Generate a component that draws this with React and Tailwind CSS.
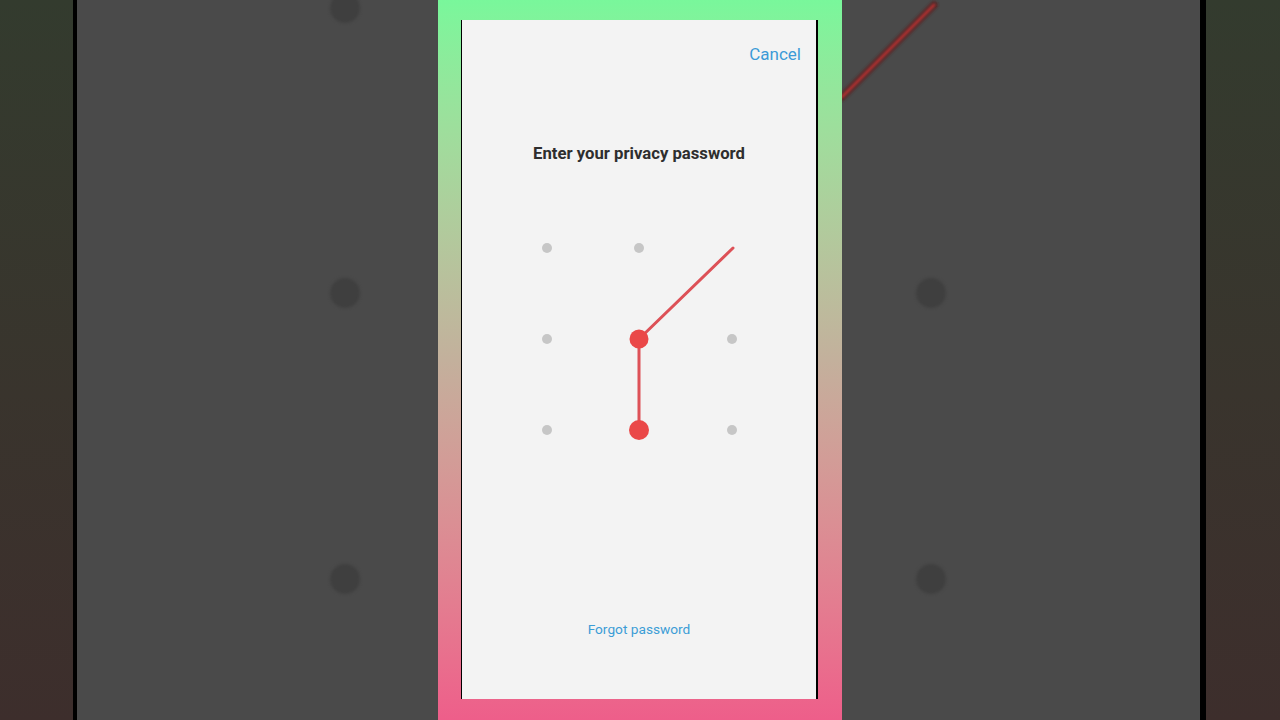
import React from "react";

function BgCircle({ x, y }) {
  return (
    <div
      className="absolute w-[30px] h-[30px] rounded-full bg-[#3f3f3f] blur-[1.5px]"
      style={{ left: x - 15, top: y - 15 }}
    />
  );
}

function Pattern() {
  const dots = [
    [85, 20], [177, 20],
    [85, 111], [270, 111],
    [85, 202], [270, 202],
  ];
  return (
    <svg width="354" height="222" viewBox="0 0 354 222" className="block">
      {dots.map(([x, y]) => (
        <circle key={x + "-" + y} cx={x} cy={y} r="5" fill="#c6c6c6" />
      ))}
      <line x1="177" y1="111" x2="271" y2="20" stroke="#dd5157" strokeWidth="3" strokeLinecap="round" />
      <line x1="177" y1="111" x2="177" y2="202" stroke="#dd5157" strokeWidth="3" strokeLinecap="round" />
      <circle cx="177" cy="111" r="9.5" fill="#ea4848" />
      <circle cx="177" cy="202" r="10" fill="#ea4848" />
    </svg>
  );
}

export default function App() {
  return (
    <div
      className="w-[1280px] h-[720px] flex overflow-hidden"
      style={{ fontFamily: "Roboto, 'Noto Sans', sans-serif" }}
    >
      <div className="w-[73px] shrink-0 h-full bg-gradient-to-b from-[#333b2e] to-[#3d2e2c]" />
      <div className="w-[4px] shrink-0 h-full bg-black" />
      <div className="relative flex-1 h-full bg-[#4a4a4a] pl-[361px]">
        <BgCircle x={268} y={8} />
        <BgCircle x={268} y={293} />
        <BgCircle x={268} y={579} />
        <BgCircle x={854} y={293} />
        <BgCircle x={854} y={579} />
        <svg className="absolute left-[750px] top-0" width="120" height="110" viewBox="0 0 120 110">
          <defs>
            <filter id="bl" x="-20%" y="-20%" width="140%" height="140%">
              <feGaussianBlur stdDeviation="1.2" />
            </filter>
          </defs>
          <line x1="15" y1="97" x2="107" y2="5" stroke="#552a2a" strokeWidth="8" filter="url(#bl)" strokeLinecap="round" />
          <line x1="15" y1="97" x2="107" y2="5" stroke="#b33333" strokeWidth="2.5" filter="url(#bl)" strokeLinecap="round" />
        </svg>
        <div className="relative w-[404px] h-full bg-gradient-to-b from-[#79f79b] via-[#c3b09c] to-[#ee5e8a] pt-[20px] pl-[23px]">
          <div className="w-[357px] h-[679px] bg-[#f3f3f3] border-l border-r-2 border-black flex flex-col">
            <div className="pt-[22px] pr-[15px] flex justify-end">
              <span className="text-[17px] leading-[24px] text-[#3c9ad7]">Cancel</span>
            </div>
            <div className="mt-[77px] text-center text-[16.7px] leading-[22px] font-bold text-[#2e2e2e]">
              Enter your privacy password
            </div>
            <div className="mt-[63px]">
              <Pattern />
            </div>
            <div className="mt-[169px] text-center text-[13.7px] leading-[20px] text-[#3c9dd6]">
              Forgot password
            </div>
          </div>
        </div>
      </div>
      <div className="w-[6px] shrink-0 h-full bg-black" />
      <div className="w-[74px] shrink-0 h-full bg-gradient-to-b from-[#333b2e] to-[#3d2e2c]" />
    </div>
  );
}
